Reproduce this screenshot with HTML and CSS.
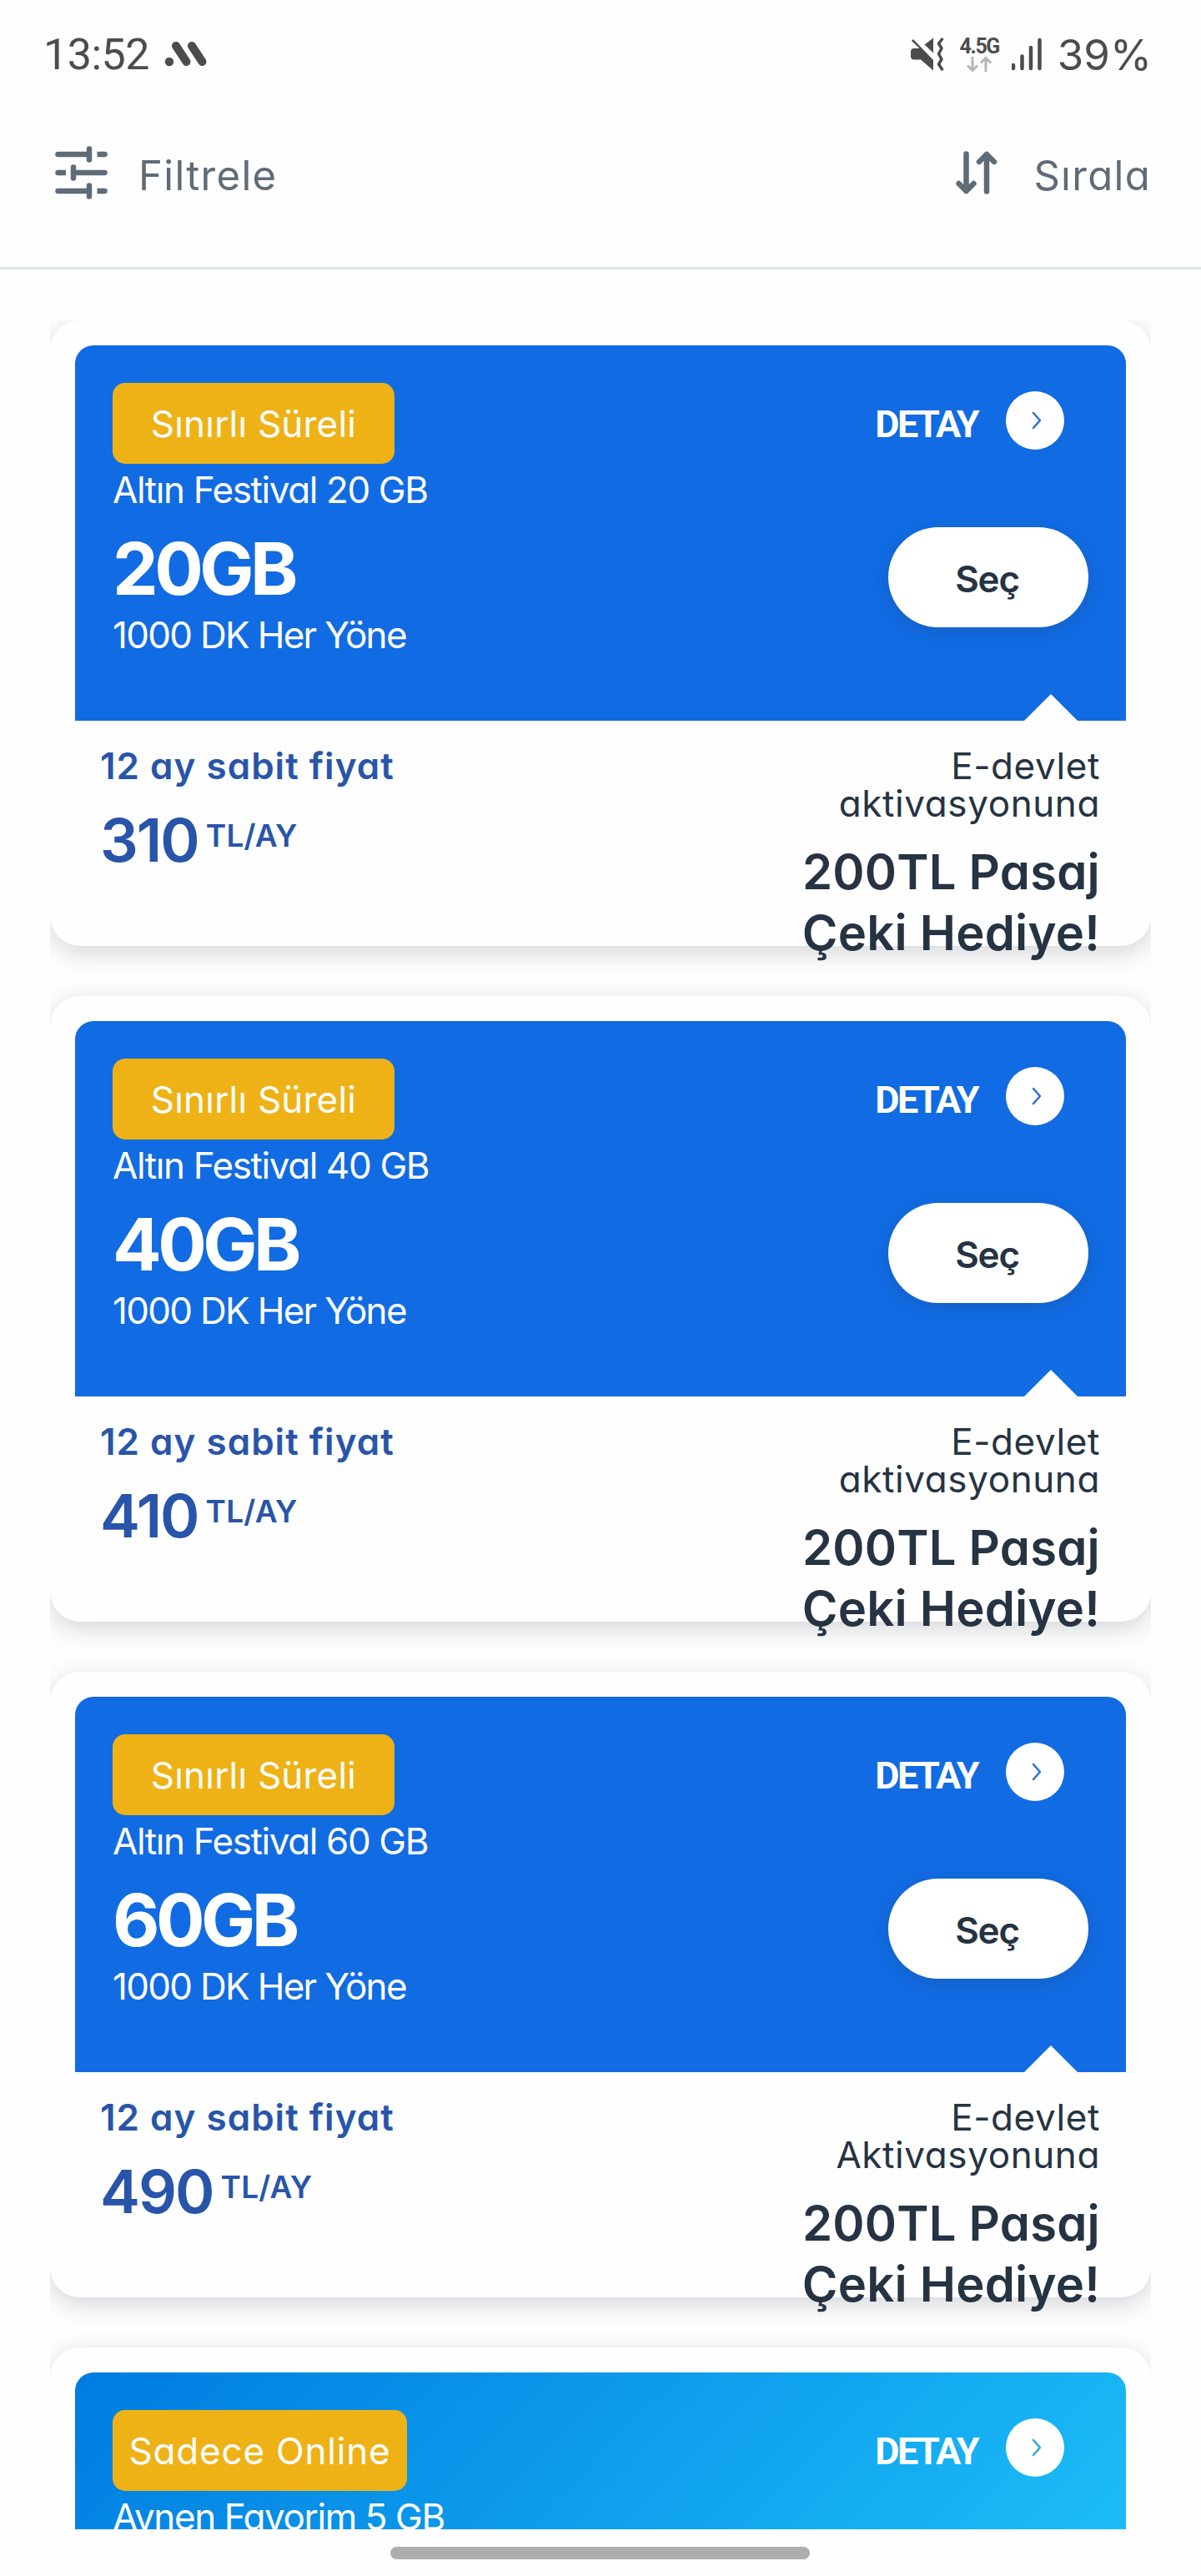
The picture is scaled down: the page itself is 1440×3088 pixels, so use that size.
FILE: index.html
```html
<!DOCTYPE html>
<html lang="tr">
<head>
    <meta charset="UTF-8" />
    <meta name="viewport" content="width=device-width, initial-scale=1.0" />
    <title>Paketler</title>
    <link rel="stylesheet" href="styles.css">
</head>
<body>
<div class="status-bar">
    <div class="status-left">
        <span class="clock">13:52</span>
        <svg class="app-icon" width="52" height="32" viewBox="0 0 52 32">
            <circle cx="6" cy="25" r="5.2" />
            <path d="M14 6L26.500 25M33 6L45.500 25" />
        </svg>
    </div>
    <div class="status-right">
        <svg class="mute-icon" width="40" height="40" viewBox="0 0 40 40">
            <path class="fill" d="M3 2L27 27V39.500L12 26.500H4q-4 0-4-4v-5.500q0-4 4-4h6.500L1 4z" />
            <path class="fill" d="M27 0.500V18.500L16.500 8.500z" />
            <path class="wave" d="M37.500 2L33.500 7L37 13L33.500 19.500L37 26L33.500 32L37.500 38" />
        </svg>
        <div class="network">
            <span>4.5G</span>
            <svg width="32" height="20" viewBox="0 0 32 20">
                <path d="M8 1v16M2 11.500l6 6 6-6M24 19V3M18 8.500l6-6 6 6" />
            </svg>
        </div>
        <svg class="signal" width="36" height="40" viewBox="0 0 36 40">
            <path d="M2 33v4M12.500 22.500V37M23 12v25M33.500 3v34" />
        </svg>
        <span class="battery">39%</span>
    </div>
</div>

<header class="toolbar">
    <button class="tool">
        <svg width="64" height="64" viewBox="0 0 64 64">
            <path class="round" d="M3.500 10H40M3.500 54H40M22 32h37.500M41 3.500v13M22 25.500v13M41 47.500v13" />
            <path class="round" d="M57 10h2.500M57 54h2.500M3.500 32h2.500" />
            <path d="M50.500 10H58M50.500 54H58M5 32h8" />
        </svg>
        <span class="filter-text">Filtrele</span>
    </button>
    <button class="tool">
        <svg width="50" height="52" viewBox="0 0 50 52">
            <path class="round" d="M12.500 3.500V48M3.500 39l9 9 9-9M37 48.500V4M28 13l9-9 9 9" />
        </svg>
        <span class="sort-text">Sırala</span>
    </button>
</header>

<main class="package-list">
    <article class="card">
        <section class="card-top">
            <div class="info">
                <span class="badge">Sınırlı Süreli</span>
                <p class="name">Altın Festival 20 GB</p>
                <h2>20GB</h2>
                <p class="minutes">1000 DK Her Yöne</p>
            </div>
            <div class="actions">
                <a class="detail">
                    <span class="detail-text">DETAY</span>
                    <span class="circle"><svg width="12" height="22" viewBox="0 0 12 22"><path d="M2 2l8 9-8 9" /></svg></span>
                </a>
                <button class="select">Seç</button>
            </div>
        </section>
        <section class="card-bottom">
            <div class="price">
                <p class="price-label">12 ay sabit fiyat</p>
                <p class="amount">310<sup>TL/AY</sup></p>
            </div>
            <div class="gift">
                <p class="gift-label">E-devlet<br><span>aktivasyonuna</span></p>
                <p class="gift-text">200TL Pasaj<br><span>Çeki Hediye!</span></p>
            </div>
        </section>
    </article>

    <article class="card">
        <section class="card-top">
            <div class="info">
                <span class="badge">Sınırlı Süreli</span>
                <p class="name">Altın Festival 40 GB</p>
                <h2>40GB</h2>
                <p class="minutes">1000 DK Her Yöne</p>
            </div>
            <div class="actions">
                <a class="detail">
                    <span class="detail-text">DETAY</span>
                    <span class="circle"><svg width="12" height="22" viewBox="0 0 12 22"><path d="M2 2l8 9-8 9" /></svg></span>
                </a>
                <button class="select">Seç</button>
            </div>
        </section>
        <section class="card-bottom">
            <div class="price">
                <p class="price-label">12 ay sabit fiyat</p>
                <p class="amount">410<sup>TL/AY</sup></p>
            </div>
            <div class="gift">
                <p class="gift-label">E-devlet<br><span>aktivasyonuna</span></p>
                <p class="gift-text">200TL Pasaj<br><span>Çeki Hediye!</span></p>
            </div>
        </section>
    </article>

    <article class="card">
        <section class="card-top">
            <div class="info">
                <span class="badge">Sınırlı Süreli</span>
                <p class="name">Altın Festival 60 GB</p>
                <h2>60GB</h2>
                <p class="minutes">1000 DK Her Yöne</p>
            </div>
            <div class="actions">
                <a class="detail">
                    <span class="detail-text">DETAY</span>
                    <span class="circle"><svg width="12" height="22" viewBox="0 0 12 22"><path d="M2 2l8 9-8 9" /></svg></span>
                </a>
                <button class="select">Seç</button>
            </div>
        </section>
        <section class="card-bottom">
            <div class="price">
                <p class="price-label">12 ay sabit fiyat</p>
                <p class="amount">490<sup>TL/AY</sup></p>
            </div>
            <div class="gift">
                <p class="gift-label">E-devlet<br><span>Aktivasyonuna</span></p>
                <p class="gift-text">200TL Pasaj<br><span>Çeki Hediye!</span></p>
            </div>
        </section>
    </article>

    <article class="card">
        <section class="card-top light">
            <div class="info">
                <span class="badge online">Sadece Online</span>
                <p class="name">Aynen Favorim 5 GB</p>
            </div>
            <div class="actions">
                <a class="detail">
                    <span class="detail-text">DETAY</span>
                    <span class="circle"><svg width="12" height="22" viewBox="0 0 12 22"><path d="M2 2l8 9-8 9" /></svg></span>
                </a>
            </div>
        </section>
    </article>
</main>

<footer class="nav-bar"><div class="handle"></div></footer>
</body>
</html>
```
FILE: styles.css
```css
* {
    box-sizing: border-box;
}
body {
    margin: 0;
    height: 3088px;
    overflow: hidden;
    display: flex;
    flex-direction: column;
    background-color: #fefefe;
    font-family: Inter, "Liberation Sans", sans-serif;
    font-feature-settings: "cv11";
    color: #253342;
}
p, h2 {
    margin: 0;
}
button {
    border: none;
    padding: 0;
    background: none;
    font-family: inherit;
    font-feature-settings: inherit;
    color: inherit;
}
svg {
    flex: none;
    fill: none;
}
/* status bar */
.status-bar {
    height: 130px;
    flex: none;
    padding: 0 59px 0 52px;
    display: flex;
    align-items: center;
    justify-content: space-between;
    font-family: Roboto, sans-serif;
    font-size: 52px;
    color: #4c4c4c;
}
.status-left, .status-right {
    display: flex;
    align-items: center;
}
.clock {
    letter-spacing: -0.5px;
}
.app-icon {
    margin-left: 18px;
    fill: #4c4c4c;
    stroke: #4c4c4c;
    stroke-width: 10;
    stroke-linecap: round;
}
.app-icon circle {
    stroke: none;
}
.mute-icon .fill {
    fill: #4c4c4c;
}
.mute-icon .wave {
    stroke: #4c4c4c;
    stroke-width: 3.5;
    stroke-linecap: round;
    stroke-linejoin: round;
}
.network {
    width: 47px;
    margin: 2px 15px 0 19px;
    display: flex;
    flex-direction: column;
    align-items: center;
    font-size: 25px;
    line-height: 22px;
    font-weight: bold;
    letter-spacing: -1.4px;
}
.network svg {
    stroke: #b5b5b5;
    stroke-width: 3;
}
.signal {
    margin-right: 19px;
    stroke: #4c4c4c;
    stroke-width: 4.5;
    stroke-linecap: round;
}
.battery {
    font-family: Inter, sans-serif;
    font-size: 51px;
}
/* filter and sort */
.toolbar {
    height: 193px;
    flex: none;
    padding: 0 60px 30px 66px;
    display: flex;
    justify-content: space-between;
    align-items: center;
    border-bottom: 3px solid #dfe3eb;
    color: #5f6b77;
}
.tool {
    display: flex;
    align-items: center;
    font-size: 49px;
    letter-spacing: 1.3px;
}
.tool svg {
    margin-bottom: 6px;
    stroke: #5f6b77;
    stroke-width: 6.5;
}
.tool .round {
    stroke-linecap: round;
    stroke-linejoin: round;
}
.filter-text {
    margin-left: 36px;
}
.sort-text {
    margin-left: 43px;
}
/* package cards */
.package-list {
    height: 2648px;
    flex: none;
    margin: 61px 60px 0;
    overflow: hidden;
}
.card {
    height: 750px;
    margin-bottom: 60px;
    padding: 30px;
    border-radius: 36px;
    background-color: #fefefe;
    box-shadow: 0 8px 30px rgba(45, 52, 66, 0.2);
}
.card-top {
    position: relative;
    height: 450px;
    padding: 45px;
    display: flex;
    justify-content: space-between;
    border-radius: 22px 22px 0 0;
    background-color: #116be2;
    color: white;
    font-size: 44px;
}
.card-top::after {
    content: "";
    position: absolute;
    right: 58px;
    bottom: 0;
    border-left: 32px solid transparent;
    border-right: 32px solid transparent;
    border-bottom: 32px solid #fefefe;
}
.card-top.light {
    background: linear-gradient(135deg, #007ce1, #20c8fb);
}
.info {
    display: flex;
    flex-direction: column;
    align-items: flex-start;
    white-space: nowrap;
}
.badge {
    width: 338px;
    height: 97px;
    line-height: 98px;
    border-radius: 15px;
    background-color: #eeb217;
    text-align: center;
    letter-spacing: 0.2px;
}
.badge.online {
    width: 353px;
    letter-spacing: 0.8px;
}
.name {
    margin-top: 3px;
    line-height: 56px;
    letter-spacing: -1.4px;
}
h2 {
    margin-top: 17px;
    font-size: 87px;
    line-height: 100px;
    letter-spacing: -4.6px;
}
.minutes {
    line-height: 58px;
    letter-spacing: -1.7px;
}
.actions {
    display: flex;
    flex-direction: column;
    align-items: flex-end;
}
.detail {
    margin: 10px 29px 0 0;
    height: 70px;
    display: flex;
    align-items: center;
    gap: 34px;
}
.detail-text {
    padding-top: 9px;
    line-height: 70px;
    font-family: Roboto, sans-serif;
    font-size: 45px;
    font-weight: bold;
    letter-spacing: -2.6px;
}
.circle {
    width: 70px;
    height: 70px;
    display: flex;
    align-items: center;
    justify-content: center;
    border-radius: 50%;
    background-color: white;
}
.circle svg {
    stroke: #2a72cc;
    stroke-width: 2.5;
    stroke-linecap: round;
    stroke-linejoin: round;
    margin-left: 3px;
}
.light .circle svg {
    stroke: #2fa5e0;
}
.select {
    width: 240px;
    height: 120px;
    margin-top: 93px;
    padding: 4px 3px 0 0;
    border-radius: 60px;
    background-color: white;
    box-shadow: 0 5px 18px rgba(37, 51, 66, 0.18);
    font-size: 44px;
    font-weight: 600;
    letter-spacing: -1.2px;
    color: #253342;
}
.card-bottom {
    padding: 32px 31px 0 30px;
    display: flex;
    justify-content: space-between;
    white-space: nowrap;
    font-size: 44px;
    line-height: 45px;
}
.price {
    color: #2855a9;
    font-weight: 600;
}
.price-label {
    letter-spacing: 1px;
}
.amount {
    margin-top: 24px;
    display: flex;
    align-items: flex-start;
    font-size: 72px;
    line-height: 84px;
    letter-spacing: -2px;
}
.amount sup {
    margin-left: 9px;
    font-size: 37px;
    line-height: 74px;
    letter-spacing: 0.2px;
}
.gift {
    text-align: right;
}
.gift-label {
    letter-spacing: 0.6px;
}
.gift-text {
    margin-top: 23px;
    font-size: 58px;
    line-height: 73px;
    font-weight: 600;
    letter-spacing: 0.2px;
}
/* bottom gesture bar */
.nav-bar {
    flex: 1;
    padding: 21px 2px 0 0;
    display: flex;
    justify-content: center;
}
.handle {
    width: 503px;
    height: 15px;
    border-radius: 8px;
    background-color: #aeaeae;
}
```
